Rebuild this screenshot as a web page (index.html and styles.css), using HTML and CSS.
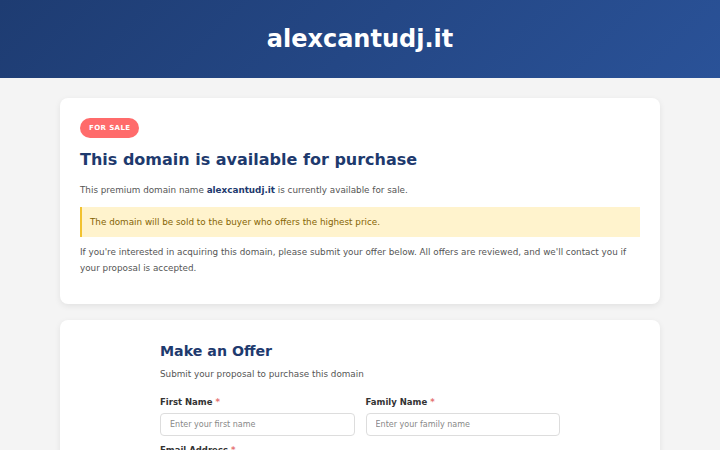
FILE: index.html
```html
<!DOCTYPE html>
<html lang="en">
<head>
<meta charset="utf-8">
<title>alexcantudj.it</title>
<link rel="stylesheet" href="styles.css">
</head>
<body>
<header class="site-header">
  <h1 class="site-title">alexcantudj.it</h1>
</header>
<main class="container">
  <section class="card">
    <span class="badge">For Sale</span>
    <h2 class="card-title">This domain is available for purchase</h2>
    <p class="lead">This premium domain name <strong>alexcantudj.it</strong> is currently available for sale.</p>
    <div class="notice">The domain will be sold to the buyer who offers the highest price.</div>
    <p class="text">If you're interested in acquiring this domain, please submit your offer below. All offers are reviewed, and we'll contact you if your proposal is accepted.</p>
  </section>
  <section class="card form-card">
    <div class="form-wrap">
      <h2 class="form-title">Make an Offer</h2>
      <p class="form-sub">Submit your proposal to purchase this domain</p>
      <div class="row">
        <div class="field">
          <label class="label">First Name <span class="req">*</span></label>
          <input class="input" type="text" placeholder="Enter your first name">
        </div>
        <div class="field">
          <label class="label">Family Name <span class="req">*</span></label>
          <input class="input" type="text" placeholder="Enter your family name">
        </div>
      </div>
      <div class="field">
        <label class="label">Email Address <span class="req">*</span></label>
        <input class="input" type="email" placeholder="Enter your email address">
      </div>
    </div>
  </section>
</main>
</body>
</html>
```
FILE: styles.css
```css
* { box-sizing: border-box; }
html, body { margin: 0; padding: 0; }
body {
  background: #f4f4f4;
  font-family: "DejaVu Sans", sans-serif;
  color: #555;
}
.site-header {
  height: 78px;
  background: linear-gradient(135deg, #1e3c72 0%, #2a5298 100%);
  display: flex;
  align-items: center;
  justify-content: center;
}
.site-title {
  margin: 0;
  color: #fff;
  font-size: 24px;
  font-weight: bold;
  line-height: 30px;
}
.container {
  width: 600px;
  margin: 20px auto;
  display: flex;
  flex-direction: column;
  gap: 16px;
}
.card {
  background: #fff;
  border-radius: 8px;
  box-shadow: 0 2px 6px rgba(0,0,0,0.08);
  padding: 20px 20px 28px;
}
.badge {
  display: block;
  width: fit-content;
  background: #ff6b6b;
  color: #fff;
  font-size: 7px;
  font-weight: bold;
  text-transform: uppercase;
  letter-spacing: 0.4px;
  padding: 0 9px;
  height: 20px;
  line-height: 20px;
  border-radius: 10px;
}
.card-title {
  margin: 10px 0 0;
  font-size: 16px;
  color: #1e3a6e;
  line-height: 24px;
}
.lead {
  margin: 10px 0 0;
  font-size: 8.8px;
  line-height: 16px;
}
.lead strong { color: #1e3a6e; }
.notice {
  margin-top: 9px;
  background: #fff3cd;
  border-left: 2px solid #f2c230;
  color: #856404;
  font-size: 8.8px;
  padding: 7px 8px;
  line-height: 16px;
}
.text {
  margin: 7px 0 0;
  font-size: 8.8px;
  line-height: 16px;
}
.form-wrap {
  width: 400px;
  margin: 0 auto;
}
.form-title {
  margin: 0;
  font-size: 14.2px;
  color: #1e3a6e;
  line-height: 22px;
}
.form-sub {
  margin: 5px 0 0;
  font-size: 8.8px;
  line-height: 14px;
}
.row {
  margin-top: 15px;
  display: flex;
  gap: 11px;
}
.field { flex: 1; display: flex; flex-direction: column; }
.label {
  font-size: 8.5px;
  font-weight: bold;
  color: #333;
  line-height: 12px;
  margin-bottom: 5px;
}
.req { color: #e57373; }
.input {
  height: 23px;
  border: 1px solid #ddd;
  border-radius: 4px;
  padding: 0 9px;
  font-family: "DejaVu Sans", sans-serif;
  font-size: 8px;
}
.input::placeholder { color: #888; }
.row + .field { margin-top: 8px; }
```
